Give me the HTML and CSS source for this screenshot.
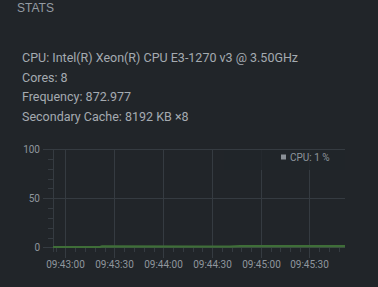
FILE: index.html
```html
<!DOCTYPE html>
<html>
<head>
<meta charset="utf-8">
<link rel="stylesheet" href="styles.css">
</head>
<body>
<div class="panel">
  <div class="title">STATS</div>
  <div class="info">
    <div class="row">CPU: Intel(R) Xeon(R) CPU E3-1270 v3 @ 3.50GHz</div>
    <div class="row">Cores: 8</div>
    <div class="row">Frequency: 872.977</div>
    <div class="row">Secondary Cache: 8192 KB ×8</div>
  </div>
  <svg class="chart" width="378" height="147" viewBox="0 0 378 147">
    <g class="grid">
      <line x1="43" y1="8.5" x2="345" y2="8.5"/>
      <line x1="43" y1="57.5" x2="345" y2="57.5"/>
      <line x1="43" y1="106.5" x2="345" y2="106.5"/>
      <line x1="65.5" y1="8" x2="65.5" y2="117"/>
      <line x1="114.5" y1="8" x2="114.5" y2="117"/>
      <line x1="163.5" y1="8" x2="163.5" y2="117"/>
      <line x1="212.5" y1="8" x2="212.5" y2="117"/>
      <line x1="261.5" y1="8" x2="261.5" y2="117"/>
      <line x1="309.5" y1="8" x2="309.5" y2="117"/>
      <line x1="53.5" y1="8" x2="53.5" y2="111"/>
    </g>
    <g class="ticks">
      <path d="M48 18.5h5M48 28.5h5M48 38.5h5M48 47.5h5M48 67.5h5M48 77.5h5M48 87.5h5M48 97.5h5"/>
      <path d="M56.5 107v4M75.5 107v4M85.5 107v4M95.5 107v4M105.5 107v4M124.5 107v4M134.5 107v4M144.5 107v4M154.5 107v4M173.5 107v4M183.5 107v4M193.5 107v4M202.5 107v4M222.5 107v4M232.5 107v4M241.5 107v4M251.5 107v4M271.5 107v4M280.5 107v4M290.5 107v4M300.5 107v4M319.5 107v4M329.5 107v4M339.5 107v4"/>
    </g>
    <rect class="legend-bg" x="224" y="9" width="121" height="20"/>
    <path class="area" d="M53 106 L100 106 L102 105.2 L200 105.5 L230 105.6 L240 105 L345 105 L345 107 L53 107 Z"/>
    <path class="line" d="M53 106 L100 106 L102 105.2 L200 105.5 L230 105.6 L240 105 L345 105"/>
    <rect class="legend-box" x="281" y="13.5" width="5" height="5"/>
    <text class="legend" x="290" y="19.5">CPU: 1 %</text>
    <g class="ylab">
      <text x="40" y="11.5">100</text>
      <text x="40" y="60.5">50</text>
      <text x="40" y="109.5">0</text>
    </g>
    <g class="xlab">
      <text x="65.5" y="127">09:43:00</text>
      <text x="114.5" y="127">09:43:30</text>
      <text x="163.5" y="127">09:44:00</text>
      <text x="212.5" y="127">09:44:30</text>
      <text x="261.5" y="127">09:45:00</text>
      <text x="309.5" y="127">09:45:30</text>
    </g>
  </svg>
</div>
</body>
</html>
```
FILE: styles.css
```css
html, body {
  margin: 0;
  padding: 0;
  background: #212529;
}
.panel {
  width: 378px;
  height: 287px;
  overflow: hidden;
  background: #212529;
}
.title {
  font-family: "Liberation Sans", Arial, sans-serif;
  font-size: 12px;
  line-height: 14px;
  color: #949ba2;
  padding: 1px 0 0 17px;
}
.info {
  padding: 33px 0 0 22px;
  font-family: Roboto, "Liberation Sans", sans-serif;
  font-size: 12.5px;
  color: #a5abb1;
}
.row {
  line-height: 19.5px;
  white-space: nowrap;
}
.chart {
  display: block;
  margin-top: 15px;
  font-family: Roboto, "Liberation Sans", sans-serif;
}
.grid line {
  stroke: #353b41;
  stroke-width: 1;
}
.ticks path {
  stroke: #353b41;
  stroke-width: 1;
  fill: none;
}
.legend-bg {
  fill: #212529;
  opacity: 0.8;
}
.area {
  fill: rgba(72, 120, 62, 0.35);
}
.line {
  fill: none;
  stroke: #3f6e38;
  stroke-width: 2;
}
.legend-box {
  fill: #8a9096;
}
.legend {
  font-size: 10px;
  fill: #8f969d;
}
.ylab text {
  font-size: 10px;
  fill: #8f969d;
  text-anchor: end;
}
.xlab text {
  font-size: 10px;
  fill: #8f969d;
  text-anchor: middle;
}
```
